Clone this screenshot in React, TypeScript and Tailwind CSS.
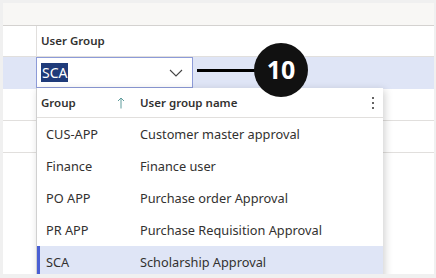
import React from "react";

const font = { fontFamily: '"Noto Sans", "Open Sans", sans-serif' };

const rows = [
  { g: "CUS-APP", n: "Customer master approval" },
  { g: "Finance", n: "Finance user" },
  { g: "PO APP", n: "Purchase order Approval" },
  { g: "PR APP", n: "Purchase Requisition Approval" },
  { g: "SCA", n: "Scholarship Approval", sel: true },
];

export default function App() {
  return (
    <div className="w-[436px] h-[278px] bg-[#f0f0f0] pt-[3px] pl-[3px] pr-[2px] pb-[4px]" style={font}>
      <div className="relative w-full h-full bg-white overflow-hidden text-[#323130]">
        {/* top bar */}
        <div className="h-[23px] bg-[#f8f7f5] border-b border-[#d4d2d0]" />
        {/* header row */}
        <div className="flex h-[31px] border-b border-[#e1dfdd]">
          <div className="w-[34px] border-r border-[#e1dfdd]" />
          <div className="flex items-center pl-[4px] text-[11.5px] font-semibold">User Group</div>
        </div>
        {/* selected row */}
        <div className="flex h-[32px] bg-[#dfe5f6]">
          <div className="w-[33px]" />
          <div className="w-[157px] h-[31px] border border-[#8d9bd8] bg-white flex items-center pl-[4px] pr-[9px]">
            <span className="bg-[#1f3b7a] text-white text-[14px] leading-[19px] px-[1px]">SCA</span>
            <div className="flex-1" />
            <svg width="14" height="8" viewBox="0 0 14 8" fill="none">
              <path d="M1 1l6 6 6-6" stroke="#444" strokeWidth="1.1" />
            </svg>
          </div>
        </div>
        {/* other rows */}
        <div className="flex h-[32px] border-b border-[#e1dfdd]">
          <div className="w-[34px] border-r border-[#e1dfdd]" />
        </div>
        <div className="flex h-[32px] border-b border-[#e1dfdd]">
          <div className="w-[34px] border-r border-[#e1dfdd]" />
        </div>

        {/* dropdown */}
        <div className="absolute left-[33px] top-[85px] w-[347px] h-[200px] bg-white border-l border-[#d0d0d0] shadow-[2px_2px_8px_rgba(0,0,0,0.18)]">
          <div className="flex items-center h-[30px] border-b border-[#e1dfdd] text-[11.5px] font-semibold relative">
            <div className="w-[103px] pl-[4px] flex items-center">
              <span>Group</span>
              <div className="flex-1" />
              <svg width="8" height="12" viewBox="0 0 8 12" fill="none" className="mr-[15px]">
                <path d="M4 11.5V1M1 4l3-3 3 3" stroke="#5f9c9c" strokeWidth="1" />
              </svg>
            </div>
            <span>User group name</span>
            <div className="flex-1" />
            <svg width="4" height="14" viewBox="0 0 4 14" className="mr-[8px]">
              <circle cx="2" cy="2" r="1" fill="#323130" />
              <circle cx="2" cy="7" r="1" fill="#323130" />
              <circle cx="2" cy="12" r="1" fill="#323130" />
            </svg>
          </div>
          {rows.map((r) => (
            <div
              key={r.g}
              className={`relative flex items-center h-[32px] pt-[2px] text-[12.75px] ${r.sel ? "bg-[#dfe5f6]" : ""}`}
            >
              {r.sel && <div className="absolute left-0 top-0 bottom-0 w-[3px] bg-[#4a5fd3]" />}
              <div className="w-[103px] pl-[9px]">{r.g}</div>
              <div>{r.n}</div>
            </div>
          ))}
        </div>

        {/* callout */}
        <div className="absolute left-[194px] top-[66px] w-[62px] h-[3px] bg-black" />
        <div className="absolute left-[251px] top-[40px] w-[54px] h-[54px] rounded-full bg-[#111] flex items-center justify-center text-white text-[25px] font-bold">
          10
        </div>
      </div>
    </div>
  );
}
